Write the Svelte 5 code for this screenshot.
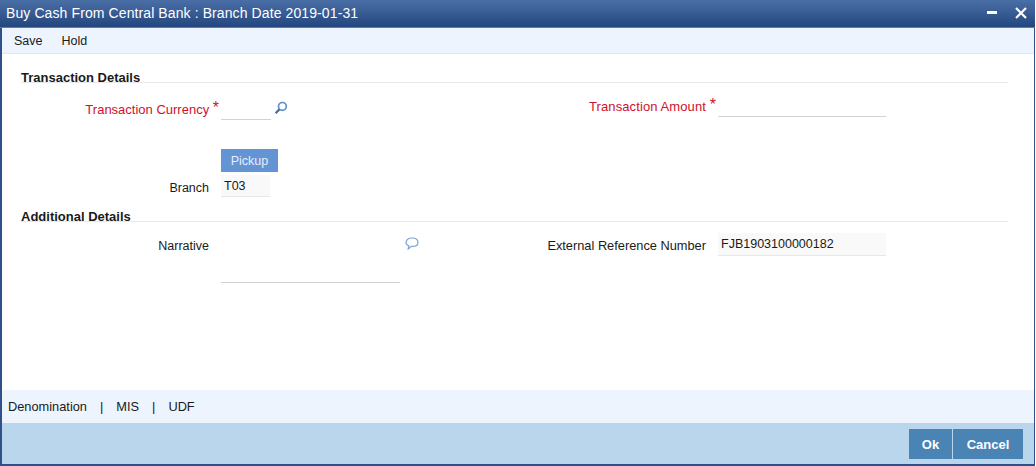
<script>
  let currency = ''
  let amount = ''
  let branch = 'T03'
  let narrative = ''
  let extRef = 'FJB1903100000182'
</script>

<div class="window">
  <header class="titlebar">
    <span class="title">Buy Cash From Central Bank : Branch Date 2019-01-31</span>
    <div class="win-btns">
      <svg width="12" height="12" viewBox="0 0 12 12"><rect x="1" y="4" width="10" height="3" fill="#fff" /></svg>
      <svg width="12" height="12" viewBox="0 0 12 12"><path d="M1 1 L11 11 M11 1 L1 11" stroke="#fff" stroke-width="2.2" /></svg>
    </div>
  </header>

  <nav class="toolbar">
    <span>Save</span>
    <span>Hold</span>
  </nav>

  <main class="body">
    <div class="legend first"><span>Transaction Details</span></div>

    <div class="row row-top">
      <div class="field left currency">
        <label class="req" for="ccy">Transaction Currency <b>*</b></label>
        <input id="ccy" class="short" bind:value={currency} />
        <svg class="lookup" width="14" height="14" viewBox="0 0 14 14">
          <circle cx="8.4" cy="5.4" r="3.9" fill="none" stroke="#5f8fc8" stroke-width="1.7" />
          <path d="M5.4 8.4 L1.6 12.2" stroke="#3f6fa8" stroke-width="2.2" />
        </svg>
      </div>
      <div class="field right">
        <label class="req amount" for="amt">Transaction Amount <b>*</b></label>
        <input id="amt" class="wide" bind:value={amount} />
      </div>
    </div>

    <div class="pickup-row">
      <button class="pickup">Pickup</button>
    </div>
    <div class="field left branch">
      <label for="branch">Branch</label>
      <input id="branch" class="short ro" readonly bind:value={branch} />
    </div>

    <div class="legend second"><span>Additional Details</span></div>

    <div class="row details">
      <div class="field left narrative">
        <label for="narr">Narrative</label>
        <textarea id="narr" bind:value={narrative}></textarea>
        <svg class="comment" width="14" height="13" viewBox="0 0 14 13">
          <path d="M7 1 C10.4 1 13 2.7 13 5.4 C13 8 10.4 9.4 7.4 9.4 L6.4 9.4 L3.2 12 L3.8 8.7 C2 8.1 1 6.9 1 5.4 C1 2.7 3.6 1 7 1 Z" fill="none" stroke="#7da3d6" stroke-width="1.2" />
        </svg>
      </div>
      <div class="field right ext">
        <label for="ext">External Reference Number</label>
        <input id="ext" class="wide ro" readonly bind:value={extRef} />
      </div>
    </div>
  </main>

  <div class="tabs">
    <span>Denomination</span><i>|</i><span>MIS</span><i>|</i><span>UDF</span>
  </div>

  <footer class="actions">
    <button class="ok">Ok</button>
    <button class="cancel">Cancel</button>
  </footer>
</div>

<style>
  :global(body) {
    margin: 0;
    background: #fff;
  }

  .window {
    box-sizing: border-box;
    width: 1035px;
    height: 466px;
    display: flex;
    flex-direction: column;
    border-left: 2px solid #2f5188;
    border-right: 1px solid #2f5188;
    border-bottom: 2px solid #2f5188;
    font-family: "Liberation Sans", Arial, sans-serif;
    font-size: 12.5px;
    color: #1a1a1a;
    background: #fff;
  }

  .titlebar {
    height: 28px;
    flex: none;
    margin-left: -2px;
    margin-right: -1px;
    display: flex;
    align-items: center;
    justify-content: space-between;
    padding: 0 8px 2px 6px;
    box-sizing: border-box;
    background: linear-gradient(#4a6fa6, #24467f);
    border-bottom: 1px solid #5d7ba5;
    color: #fff;
    font-size: 14px;
    letter-spacing: 0.1px;
  }

  .win-btns {
    display: flex;
    gap: 17px;
    align-items: center;
  }

  .toolbar {
    height: 26px;
    flex: none;
    display: flex;
    align-items: center;
    gap: 19px;
    padding-left: 12px;
    box-sizing: border-box;
    background: #edf4fe;
    border-bottom: 1px solid #e3e6ea;
  }

  .body {
    flex: 1;
    min-height: 0;
  }

  .legend {
    margin: 0 26px 0 19px;
    height: 15px;
    border-bottom: 1px solid #e6e8ea;
    font-weight: bold;
    font-size: 13px;
    line-height: 22px;
    white-space: nowrap;
  }

  .legend.first {
    margin-top: 13px;
  }

  .legend.second {
    margin-top: 7px;
  }

  .row {
    display: flex;
  }

  .row-top {
    margin-top: 12px;
  }

  .details {
    margin-top: 11px;
  }

  .field {
    display: flex;
    align-items: flex-start;
  }

  .field.left {
    width: 502px;
  }

  .currency {
    margin-top: 3px;
  }

  .field label {
    display: block;
    text-align: right;
    white-space: nowrap;
    line-height: 23px;
    box-sizing: border-box;
  }

  .left label {
    width: 219px;
    padding-right: 12px;
  }

  .right label {
    width: 214px;
    padding-right: 12px;
  }

  .left label.req,
  .right label.req {
    padding-right: 2px;
    color: #d0102c;
    font-size: 13px;
  }

  .right label.amount {
    letter-spacing: 0.1px;
  }

  .req b {
    font-weight: normal;
    font-size: 16px;
    line-height: 12px;
    color: #d0102c;
    vertical-align: 1px;
  }

  input,
  textarea {
    display: block;
    box-sizing: border-box;
    border: none;
    border-bottom: 1px solid #d2d2d6;
    background: transparent;
    font: inherit;
    color: inherit;
    padding: 0 3px;
    margin: 0;
    outline: none;
    resize: none;
  }

  input {
    height: 22px;
  }

  .short {
    width: 50px;
  }

  .wide {
    width: 168px;
  }

  .ro {
    background: #f9f9f9;
    border-bottom-color: #e8e8e8;
  }

  .ext input {
    height: 23px;
  }

  .ext label {
    font-size: 12.8px;
    line-height: 26px;
  }

  .lookup {
    margin: 3px 0 0 3px;
  }

  .pickup-row {
    margin: 28px 0 0 219px;
  }

  .pickup {
    display: block;
    width: 57px;
    height: 23px;
    border: none;
    padding: 0;
    background: #6394d4;
    color: #e6eefa;
    font: inherit;
  }

  .branch {
    margin-top: 3px;
    height: 24px;
  }

  .branch input {
    width: 49px;
  }

  .branch label {
    line-height: 26px;
  }

  .narrative textarea {
    width: 179px;
    height: 50px;
  }

  .narrative label {
    line-height: 26px;
  }

  .comment {
    margin: 4px 0 0 5px;
  }

  .tabs {
    flex: none;
    height: 33px;
    display: flex;
    align-items: center;
    padding-left: 6px;
    box-sizing: border-box;
    background: #edf4fe;
    font-size: 12.8px;
  }

  .tabs i {
    font-style: normal;
    margin: 0 13px;
  }

  .actions {
    flex: none;
    height: 41px;
    display: flex;
    justify-content: flex-end;
    align-items: flex-start;
    gap: 1px;
    padding: 6px 11px 0 0;
    box-sizing: border-box;
    background: #bad6ed;
  }

  .actions button {
    height: 30px;
    border: none;
    padding: 0;
    background: #4a84b5;
    color: #fff;
    font: bold 13px "Liberation Sans", Arial, sans-serif;
  }

  .ok {
    width: 43px;
  }

  .cancel {
    width: 70px;
  }
</style>
